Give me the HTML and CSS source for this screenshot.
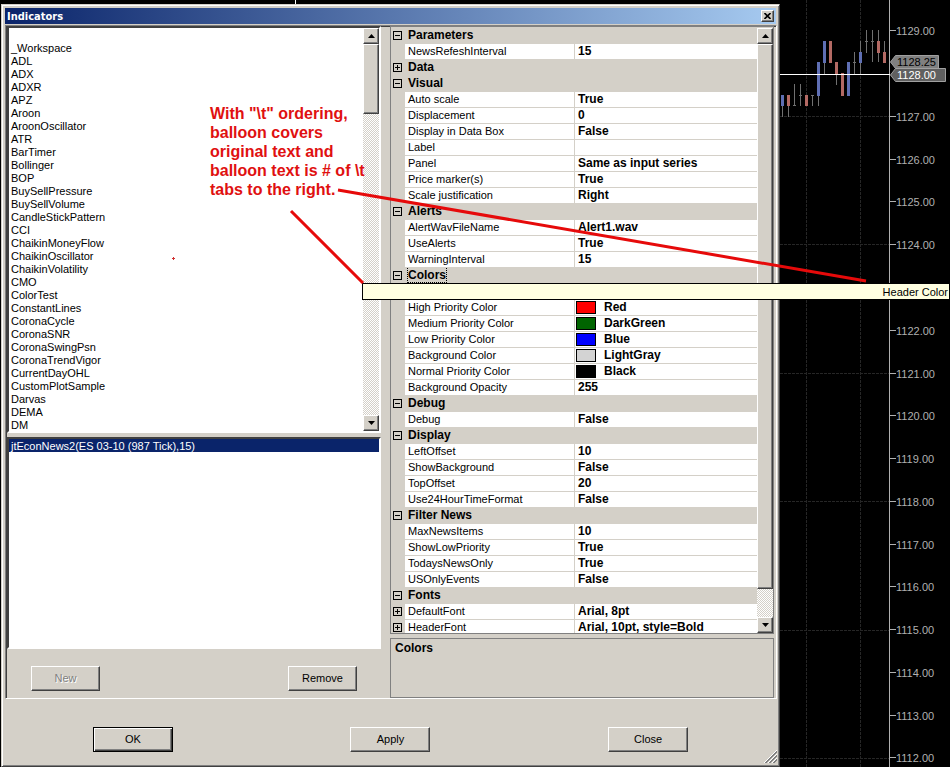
FILE: index.html
```html
<!DOCTYPE html>
<html lang="en">
<head>
  <meta charset="UTF-8" />
  <title>Indicators</title>
  <link rel="stylesheet" href="styles.css">
</head>
<body>

<div class="desktop">
  <div class="edge-marks"></div>

  <div class="dialog" role="dialog" aria-labelledby="dialog-title">
    <div class="titlebar">
      <h1 id="dialog-title">Indicators</h1>
      <button type="button" class="close-x" aria-label="Close window">
        <svg width="7" height="6" viewBox="0 0 7 6"><path d="M0.5 0L6.5 6M6.5 0L0.5 6" stroke="#000" stroke-width="1.6"/></svg>
      </button>
    </div>

    <div class="panes">
      <div class="left">
        <div class="listbox">
          <select id="available" size="31" aria-label="Available indicators">
            <option></option>
            <option>_Workspace</option>
            <option>ADL</option>
            <option>ADX</option>
            <option>ADXR</option>
            <option>APZ</option>
            <option>Aroon</option>
            <option>AroonOscillator</option>
            <option>ATR</option>
            <option>BarTimer</option>
            <option>Bollinger</option>
            <option>BOP</option>
            <option>BuySellPressure</option>
            <option>BuySellVolume</option>
            <option>CandleStickPattern</option>
            <option>CCI</option>
            <option>ChaikinMoneyFlow</option>
            <option>ChaikinOscillator</option>
            <option>ChaikinVolatility</option>
            <option>CMO</option>
            <option>ColorTest</option>
            <option>ConstantLines</option>
            <option>CoronaCycle</option>
            <option>CoronaSNR</option>
            <option>CoronaSwingPsn</option>
            <option>CoronaTrendVigor</option>
            <option>CurrentDayOHL</option>
            <option>CustomPlotSample</option>
            <option>Darvas</option>
            <option>DEMA</option>
            <option>DM</option>
          </select>
          <div class="scrollbar">
            <button type="button" class="arrow" aria-label="Scroll up"><svg width="7" height="4" viewBox="0 0 7 4"><path d="M0 4L3.5 0L7 4z"/></svg></button>
            <div class="thumb thumb-short"></div>
            <div class="track"></div>
            <button type="button" class="arrow" aria-label="Scroll down"><svg width="7" height="4" viewBox="0 0 7 4"><path d="M0 0L3.5 4L7 0z"/></svg></button>
          </div>
        </div>

        <div class="listbox">
          <select id="applied" size="16" aria-label="Applied indicators">
            <option selected>jtEconNews2(ES 03-10 (987 Tick),15)</option>
          </select>
        </div>

        <div class="list-actions">
          <button type="button" class="btn small" disabled>New</button>
          <button type="button" class="btn small">Remove</button>
        </div>
      </div>

      <div class="right">
        <div class="props">
          <table>
            <colgroup><col class="c-toggle"><col class="c-name"><col></colgroup>
            <tbody>
              <tr class="cat"><td><button type="button" class="toggle minus" aria-label="Collapse Parameters"></button></td><th colspan="2">Parameters</th></tr>
              <tr><td></td><td>NewsRefeshInterval</td><td>15</td></tr>
              <tr class="cat"><td><button type="button" class="toggle plus" aria-label="Expand Data"></button></td><th colspan="2">Data</th></tr>
              <tr class="cat"><td><button type="button" class="toggle minus" aria-label="Collapse Visual"></button></td><th colspan="2">Visual</th></tr>
              <tr><td></td><td>Auto scale</td><td>True</td></tr>
              <tr><td></td><td>Displacement</td><td>0</td></tr>
              <tr><td></td><td>Display in Data Box</td><td>False</td></tr>
              <tr><td></td><td>Label</td><td></td></tr>
              <tr><td></td><td>Panel</td><td>Same as input series</td></tr>
              <tr><td></td><td>Price marker(s)</td><td>True</td></tr>
              <tr><td></td><td>Scale justification</td><td>Right</td></tr>
              <tr class="cat"><td><button type="button" class="toggle minus" aria-label="Collapse Alerts"></button></td><th colspan="2">Alerts</th></tr>
              <tr><td></td><td>AlertWavFileName</td><td>Alert1.wav</td></tr>
              <tr><td></td><td>UseAlerts</td><td>True</td></tr>
              <tr><td></td><td>WarningInterval</td><td>15</td></tr>
              <tr class="cat"><td><button type="button" class="toggle minus" aria-label="Collapse Colors"></button></td><th colspan="2"><span class="focused">Colors</span></th></tr>
              <tr><td></td><td></td><td></td></tr>
              <tr><td></td><td>High Priority Color</td><td class="color"><i class="swatch red"></i>Red</td></tr>
              <tr><td></td><td>Medium Priority Color</td><td class="color"><i class="swatch dark-green"></i>DarkGreen</td></tr>
              <tr><td></td><td>Low Priority Color</td><td class="color"><i class="swatch blue"></i>Blue</td></tr>
              <tr><td></td><td>Background Color</td><td class="color"><i class="swatch light-gray"></i>LightGray</td></tr>
              <tr><td></td><td>Normal Priority Color</td><td class="color"><i class="swatch black"></i>Black</td></tr>
              <tr><td></td><td>Background Opacity</td><td>255</td></tr>
              <tr class="cat"><td><button type="button" class="toggle minus" aria-label="Collapse Debug"></button></td><th colspan="2">Debug</th></tr>
              <tr><td></td><td>Debug</td><td>False</td></tr>
              <tr class="cat"><td><button type="button" class="toggle minus" aria-label="Collapse Display"></button></td><th colspan="2">Display</th></tr>
              <tr><td></td><td>LeftOffset</td><td>10</td></tr>
              <tr><td></td><td>ShowBackground</td><td>False</td></tr>
              <tr><td></td><td>TopOffset</td><td>20</td></tr>
              <tr><td></td><td>Use24HourTimeFormat</td><td>False</td></tr>
              <tr class="cat"><td><button type="button" class="toggle minus" aria-label="Collapse Filter News"></button></td><th colspan="2">Filter News</th></tr>
              <tr><td></td><td>MaxNewsItems</td><td>10</td></tr>
              <tr><td></td><td>ShowLowPriority</td><td>True</td></tr>
              <tr><td></td><td>TodaysNewsOnly</td><td>True</td></tr>
              <tr><td></td><td>USOnlyEvents</td><td>False</td></tr>
              <tr class="cat"><td><button type="button" class="toggle minus" aria-label="Collapse Fonts"></button></td><th colspan="2">Fonts</th></tr>
              <tr><td><button type="button" class="toggle plus" aria-label="Expand DefaultFont"></button></td><td>DefaultFont</td><td>Arial, 8pt</td></tr>
              <tr><td><button type="button" class="toggle plus" aria-label="Expand HeaderFont"></button></td><td>HeaderFont</td><td>Arial, 10pt, style=Bold</td></tr>
            </tbody>
          </table>
          <div class="scrollbar">
            <button type="button" class="arrow" aria-label="Scroll up"><svg width="7" height="4" viewBox="0 0 7 4"><path d="M0 4L3.5 0L7 4z"/></svg></button>
            <div class="thumb thumb-long"></div>
            <div class="track"></div>
            <button type="button" class="arrow" aria-label="Scroll down"><svg width="7" height="4" viewBox="0 0 7 4"><path d="M0 0L3.5 4L7 0z"/></svg></button>
          </div>
        </div>
        <div class="help">Colors</div>
      </div>
    </div>

    <div class="dialog-actions">
      <button type="button" class="btn default">OK</button>
      <button type="button" class="btn">Apply</button>
      <button type="button" class="btn">Close</button>
      <svg class="grip" width="13" height="13" viewBox="0 0 13 13">
        <path d="M0 13L13 0M4 13L13 4M8 13L13 8" stroke="#fff"/>
        <path d="M1 13L13 1M2 13L13 2M5 13L13 5M6 13L13 6M9 13L13 9M10 13L13 10" stroke="#808080"/>
      </svg>
    </div>
  </div>

  <svg class="chart" width="170" height="767" viewBox="0 0 170 767">
    <g class="gridlines">
      <path d="M26.5 0V767M80.5 0V767"/>
      <path d="M0 116.5H109M0 244.5H109M0 373.5H109M0 501.5H109M0 630.5H109M0 758.5H109"/>
    </g>
    <g class="wicks">
      <path d="M2.5 95V117M8.5 95V117M14.5 84V106M20.5 84V106M26.5 95V106M32.5 95V106M38.5 62V106M44.5 41V74M56.5 62V85M74.5 52V74M80.5 41V74M86.5 30V53M92.5 30V62M98.5 30V62M104.5 41V62"/>
      <path d="M13 105.5H16M19 95.5H22M31 95.5H34M73 62.5H76M85 41.5H88M91 41.5H94"/>
    </g>
    <g class="up">
      <rect x="1" y="95" width="3" height="11"/>
      <rect x="37" y="62" width="3" height="34"/>
      <rect x="43" y="41" width="3" height="22"/>
      <rect x="67" y="62" width="3" height="34"/>
      <rect x="79" y="52" width="3" height="11"/>
    </g>
    <g class="down">
      <rect x="7" y="95" width="3" height="11"/>
      <rect x="25" y="95" width="3" height="11"/>
      <rect x="49" y="41" width="3" height="22"/>
      <rect x="55" y="62" width="3" height="12"/>
      <rect x="61" y="73" width="3" height="23"/>
      <rect x="97" y="41" width="3" height="12"/>
      <rect x="103" y="52" width="3" height="11"/>
    </g>
    <path class="axis" d="M109.5 0V767M109 30.5H116M109 116.5H116M109 159.5H116M109 201.5H116M109 244.5H116M109 330.5H116M109 373.5H116M109 415.5H116M109 458.5H116M109 501.5H116M109 544.5H116M109 586.5H116M109 629.5H116M109 672.5H116M109 715.5H116M109 757.5H116"/>
    <path d="M0 74.5H110" stroke="#fff"/>
    <g class="prices">
      <text x="116" y="35">1129.00</text>
      <text x="116" y="121">1127.00</text>
      <text x="116" y="164">1126.00</text>
      <text x="116" y="206">1125.00</text>
      <text x="116" y="249">1124.00</text>
      <text x="116" y="335">1122.00</text>
      <text x="116" y="378">1121.00</text>
      <text x="116" y="420">1120.00</text>
      <text x="116" y="463">1119.00</text>
      <text x="116" y="506">1118.00</text>
      <text x="116" y="549">1117.00</text>
      <text x="116" y="591">1116.00</text>
      <text x="116" y="634">1115.00</text>
      <text x="116" y="677">1114.00</text>
      <text x="116" y="720">1113.00</text>
      <text x="116" y="762">1112.00</text>
    </g>
    <path d="M110.5 62L115.5 55.5H158.5V68.5H115.5z" fill="#808080" stroke="#a0a0a0"/>
    <path d="M110.5 75L115.5 68.5H165.5V81.5H115.5z" fill="#606060" stroke="#a0a0a0"/>
    <text class="last-price" x="117" y="66">1128.25</text>
    <text class="cursor-price" x="117" y="79">1128.00</text>
  </svg>

  <div class="tooltip" role="tooltip">Header Color</div>

  <svg class="pointers" width="950" height="300" viewBox="0 0 950 300">
    <path d="M338 190L866 281M291 211L363 283" stroke="#e60a0a" stroke-width="3"/>
    <rect x="172" y="258" width="3" height="1" fill="#d03030"/>
    <rect x="173" y="257" width="1" height="3" fill="#d03030"/>
  </svg>
  <p class="note">With "\t" ordering,<br>balloon covers<br>original text and<br>balloon text is # of \t<br>tabs to the right.</p>
</div>

</body>
</html>
```
FILE: styles.css
```css
* {
  box-sizing: border-box;
}
body {
  margin: 0;
  background: #000;
  color: #000;
  font-family: "Liberation Sans", Arial, sans-serif;
  font-size: 11px;
  line-height: 13px;
}
.desktop {
  position: relative;
  display: flex;
  align-items: flex-start;
  overflow: hidden;
}
.edge-marks {
  position: absolute;
  left: 295px;
  top: 0;
  width: 1px;
  height: 4px;
  background: #fff;
}

/* dialog window */
.dialog {
  flex: 1;
  min-width: 0;
  margin: 4px 0 0 1px;
  padding: 2px;
  background: #d4d0c8;
  border: 1px solid #d4d0c8;
  border-right-color: #404040;
  border-bottom-color: #404040;
  box-shadow: inset 1px 1px #fff, inset -1px -1px #808080;
}
.titlebar {
  display: flex;
  align-items: center;
  justify-content: space-between;
  height: 16px;
  margin: 1px 1px 0;
  padding: 0 2px;
  background: linear-gradient(to right, #0a246a, #a6caf0);
}
.titlebar h1 {
  margin: 0;
  color: #fff;
  font-family: "DejaVu Sans Condensed", "DejaVu Sans", sans-serif;
  font-size: 11px;
  font-weight: bold;
}
button {
  font-family: inherit;
  font-size: 11px;
  line-height: 13px;
  color: #000;
  background: #d4d0c8;
  border: 1px solid;
  border-color: #fff #404040 #404040 #fff;
  box-shadow: inset -1px -1px #808080;
  padding: 0;
}
.close-x {
  display: flex;
  align-items: center;
  justify-content: center;
  width: 13px;
  height: 12px;
}
.panes {
  display: grid;
  grid-template-columns: 383px 1fr;
  margin: 1px 0 0 1px;
  border: 1px solid;
  border-color: #808080 #fff #fff #808080;
  box-shadow: inset 1px 1px #404040;
  padding: 0 2px 0 1px;
}
.listbox {
  display: flex;
  width: 374px;
  margin-bottom: 4px;
  background: #fff;
  border: 2px solid;
  border-color: #404040 #fff #fff #404040;
}
select {
  flex: 1;
  min-width: 0;
  appearance: none;
  overflow: hidden;
  margin: 0;
  padding: 0;
  border: 0;
  border-radius: 0;
  outline: 0;
  background: #fff;
  color: #000;
  font-family: inherit;
  font-size: 11px;
}
select option {
  height: 13px;
  min-height: 13px;
  padding: 1px 2px 0;
  line-height: 13px;
}
select option:checked {
  background: #0a246a linear-gradient(#0a246a, #0a246a);
  color: #fff !important;
}
.list-actions {
  display: flex;
  justify-content: space-between;
  width: 374px;
  padding: 13px 24px 7px;
}

/* scrollbars */
.scrollbar {
  display: flex;
  flex-direction: column;
  width: 16px;
}
.arrow {
  display: flex;
  align-items: center;
  justify-content: center;
  flex: none;
  width: 16px;
  height: 16px;
}
.thumb {
  flex: none;
  background: #d4d0c8;
  border: 1px solid;
  border-color: #fff #404040 #404040 #fff;
  box-shadow: inset -1px -1px #808080;
}
.thumb-short {
  height: 70px;
}
.thumb-long {
  height: 545px;
}
.track {
  flex: 1;
  background: repeating-conic-gradient(#fff 0 25%, #d4d0c8 0 50%) 0 0 / 2px 2px;
}

/* property grid */
.right {
  display: flex;
  flex-direction: column;
  gap: 4px;
  min-width: 0;
}
.props {
  display: flex;
  align-items: flex-start;
  height: 608px;
  padding-top: 1px;
  overflow: hidden;
  border: 1px solid #808080;
}
.props .scrollbar {
  align-self: stretch;
}
table {
  flex: 1;
  min-width: 0;
  table-layout: fixed;
  border-collapse: separate;
  border-spacing: 0;
}
.c-toggle {
  width: 14px;
}
.c-name {
  width: 170px;
}
tr {
  height: 16px;
}
td, th {
  height: 16px;
  padding: 0 3px;
  overflow: hidden;
  white-space: nowrap;
  text-align: left;
  line-height: 15px;
  background: #fff;
  border-bottom: 1px solid #d4d0c8;
}
td:first-child, .cat th {
  background: #d4d0c8;
}
td:first-child {
  padding: 0 2px;
}
td:nth-child(2) {
  border-right: 1px solid #d4d0c8;
}
td:nth-child(3), th, .help {
  font-size: 12px;
  font-weight: bold;
}
.toggle {
  display: block;
  width: 9px;
  height: 9px;
  border: 1px solid #000;
  box-shadow: none;
  background: linear-gradient(#000, #000) center / 5px 1px no-repeat;
}
.toggle.plus {
  background: linear-gradient(#000, #000) center / 5px 1px no-repeat, linear-gradient(#000, #000) center / 1px 5px no-repeat;
}
.focused {
  outline: 1px dotted #000;
}
.swatch {
  display: inline-block;
  width: 20px;
  height: 13px;
  margin: 1px 8px 0 0;
  vertical-align: top;
  border: 1px solid #000;
}
td.color {
  padding: 0 1px;
}
.red { background: #f00; }
.dark-green { background: #006400; }
.blue { background: #00f; }
.light-gray { background: #d3d3d3; }
.black { background: #000; }
.help {
  flex: 1;
  min-height: 59px;
  padding: 3px 4px;
  border: 1px solid #808080;
}

/* buttons */
.dialog-actions {
  position: relative;
  display: grid;
  grid-template-columns: repeat(3, 1fr);
  justify-items: center;
  padding: 28px 0 12px;
}
.btn {
  width: 80px;
  height: 25px;
}
.btn.small {
  width: 69px;
}
.btn.default {
  border-color: #000;
  box-shadow: inset 1px 1px #fff, inset -1px -1px #404040, inset -2px -2px #808080;
}
.btn:disabled {
  color: #808080;
  text-shadow: 1px 1px #fff;
}
.grip {
  position: absolute;
  right: 0;
  bottom: 1px;
}

/* price chart */
.chart {
  flex: none;
  display: block;
}
.gridlines {
  stroke: #262626;
  stroke-dasharray: 3 1;
}
.wicks {
  stroke: #707070;
}
.up {
  fill: #5f6fb4;
}
.down {
  fill: #b46a64;
}
.axis {
  fill: none;
  stroke: #b0b0b0;
}
.prices {
  fill: #b0b0b0;
}
.last-price {
  fill: #000;
}
.cursor-price {
  fill: #fff;
}

/* overlays */
.tooltip {
  position: absolute;
  top: 283px;
  left: 362px;
  right: 0;
  height: 17px;
  padding: 2px 1px;
  text-align: right;
  background: #ffffe1;
  border: 1px solid #000;
}
.pointers {
  position: absolute;
  top: 0;
  left: 0;
  fill: none;
  pointer-events: none;
}
.note {
  position: absolute;
  top: 104px;
  left: 210px;
  margin: 0;
  color: #e01010;
  font-size: 16px;
  font-weight: bold;
  line-height: 19px;
  white-space: nowrap;
}
```
